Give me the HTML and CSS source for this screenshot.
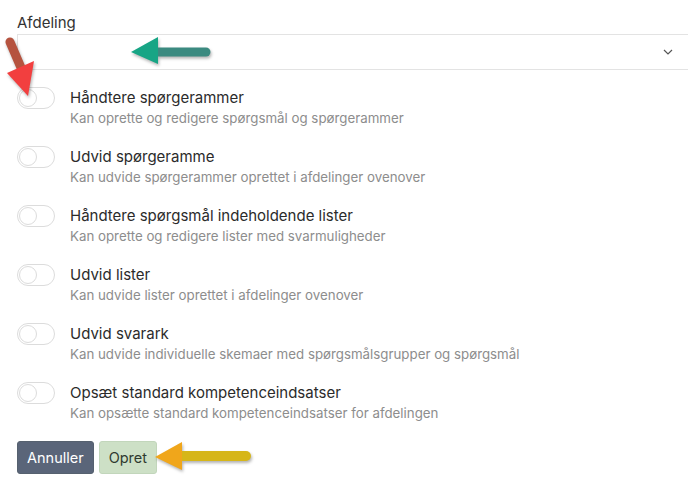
FILE: index.html
```html
<!DOCTYPE html>
<html lang="da">
<head>
    <meta charset="UTF-8">
    <meta name="viewport" content="width=device-width, initial-scale=1.0">
    <title>Rettigheder</title>
    <link rel="stylesheet" href="styles.css">
</head>
<body>
    <div class="page">
        <label class="field-label" for="department">Afdeling</label>
        <div class="select">
            <span class="select-value" id="department"></span>
            <svg class="chevron" width="10" height="6" viewBox="0 0 10 6">
                <path d="M1 1 L5 5 L9 1" fill="none" stroke="#555" stroke-width="1.2"/>
            </svg>
        </div>

        <ul class="permissions">
            <li class="permission">
                <span class="toggle"><span class="knob"></span></span>
                <div class="permission-text">
                    <div class="permission-title">Håndtere spørgerammer</div>
                    <div class="permission-desc">Kan oprette og redigere spørgsmål og spørgerammer</div>
                </div>
            </li>
            <li class="permission">
                <span class="toggle"><span class="knob"></span></span>
                <div class="permission-text">
                    <div class="permission-title">Udvid spørgeramme</div>
                    <div class="permission-desc">Kan udvide spørgerammer oprettet i afdelinger ovenover</div>
                </div>
            </li>
            <li class="permission">
                <span class="toggle"><span class="knob"></span></span>
                <div class="permission-text">
                    <div class="permission-title">Håndtere spørgsmål indeholdende lister</div>
                    <div class="permission-desc">Kan oprette og redigere lister med svarmuligheder</div>
                </div>
            </li>
            <li class="permission">
                <span class="toggle"><span class="knob"></span></span>
                <div class="permission-text">
                    <div class="permission-title">Udvid lister</div>
                    <div class="permission-desc">Kan udvide lister oprettet i afdelinger ovenover</div>
                </div>
            </li>
            <li class="permission">
                <span class="toggle"><span class="knob"></span></span>
                <div class="permission-text">
                    <div class="permission-title">Udvid svarark</div>
                    <div class="permission-desc">Kan udvide individuelle skemaer med spørgsmålsgrupper og spørgsmål</div>
                </div>
            </li>
            <li class="permission">
                <span class="toggle"><span class="knob"></span></span>
                <div class="permission-text">
                    <div class="permission-title">Opsæt standard kompetenceindsatser</div>
                    <div class="permission-desc">Kan opsætte standard kompetenceindsatser for afdelingen</div>
                </div>
            </li>
        </ul>

        <div class="actions">
            <button class="btn btn-cancel">Annuller</button>
            <button class="btn btn-create">Opret</button>
        </div>
    </div>

    <!-- annotation arrows drawn on top of the screenshot -->
    <svg class="arrows" width="688" height="484" viewBox="0 0 688 484">
        <g class="arrow">
            <line x1="10" y1="42" x2="22" y2="70" stroke="#b5533f" stroke-width="9" stroke-linecap="round"/>
            <polygon points="7,73 34,61 28,96" fill="#f23f3f"/>
        </g>
        <g class="arrow">
            <line x1="156" y1="52" x2="206" y2="52" stroke="#3b8a80" stroke-width="9" stroke-linecap="round"/>
            <polygon points="131,52 158,37 158,64" fill="#17a585"/>
        </g>
        <g class="arrow">
            <line x1="180" y1="456" x2="246" y2="456" stroke="#d6b619" stroke-width="10" stroke-linecap="round"/>
            <polygon points="155,457 182,442 182,470" fill="#f0a61b"/>
        </g>
    </svg>
</body>
</html>
```

FILE: styles.css
```css
body {
    font-family: 'Inter', 'Noto Sans', sans-serif;
    background-color: #fff;
    margin: 0;
    overflow: hidden;
}
.page {
    padding: 13px 0 0 17px;
}
.field-label {
    display: block;
    font-size: 15px;
    line-height: 20px;
    color: #333;
}
.select {
    display: flex;
    align-items: center;
    justify-content: flex-end;
    height: 34px;
    margin-top: 1px;
    margin-right: -2px;
    padding-right: 16px;
    border: 1px solid #e3e3e3;
}
.select-value {
    flex: 1;
}
.chevron {
    display: block;
}
.permissions {
    list-style: none;
    margin: 17px 0 0;
    padding: 0;
    display: flex;
    flex-direction: column;
    gap: 17px;
}
.permission {
    display: flex;
    gap: 15px;
}
.toggle {
    flex: none;
    box-sizing: border-box;
    width: 38px;
    height: 22px;
    border: 1px solid #dcdcdc;
    border-radius: 11px;
    padding: 1px;
}
.knob {
    display: block;
    box-sizing: border-box;
    width: 18px;
    height: 18px;
    border: 1px solid #dcdcdc;
    border-radius: 50%;
}
.permission-title {
    font-size: 15px;
    line-height: 21px;
    color: #2b2b2b;
}
.permission-desc {
    font-size: 13.3px;
    line-height: 21px;
    color: #8d8d8d;
}
.actions {
    display: flex;
    gap: 5px;
    margin-top: 17px;
}
.btn {
    font-family: inherit;
    font-size: 14.5px;
    height: 33px;
    padding: 0 9px;
    border-radius: 3px;
    cursor: pointer;
}
.btn-cancel {
    background-color: #5a6579;
    border: 1px solid #56616f;
    color: #fff;
}
.btn-create {
    background-color: #cde0c6;
    border: 1px solid #c2d6bb;
    color: #2f3a2f;
}
.arrows {
    position: absolute;
    top: 0;
    left: 0;
    pointer-events: none;
}
.arrow {
    filter: drop-shadow(1px 2px 1.5px rgba(0, 0, 0, 0.3));
}
```
